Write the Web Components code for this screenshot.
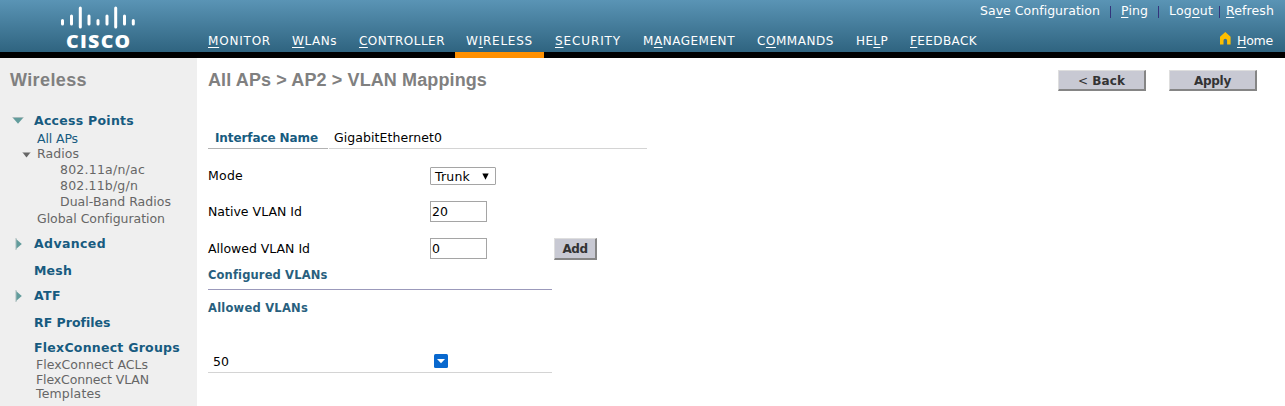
<!DOCTYPE html>
<html lang="en"><head><meta charset="utf-8"><title>Wireless - VLAN Mappings</title>
<style>html,body{margin:0;height:406px;overflow:hidden;background:#fff}body{font:12.5px/16px "DejaVu Sans",sans-serif}</style></head>
<body><wlc-app></wlc-app>
<script>
const define = (name, html, init) => {
  const t = document.createElement('template'); t.innerHTML = html;
  customElements.define(name, class extends HTMLElement {
    constructor() { super(); this.attachShadow({mode:'open'}).append(t.content.cloneNode(true)); }
    connectedCallback() { if (init) init(this, this.shadowRoot); }
  });
};

// A single line of text, tracked so that it fills the width in its "w" attribute.
define('fit-text', `<style>:host{display:inline-block;white-space:pre;flex:none;line-height:16px;height:16px}</style><slot></slot>`, el => {
  const fit = () => {
    el.style.letterSpacing = '0';
    el.style.width = 'auto';
    const n = el.textContent.length, w = +el.getAttribute('w');
    const r = document.createRange(); r.selectNodeContents(el);
    const natural = r.getBoundingClientRect().width;
    if (natural) el.style.letterSpacing = ((w - natural) / n) + 'px';
    el.style.width = w + 'px';
  };
  requestAnimationFrame(fit);
});

define('cisco-logo', `<style>:host{display:block;width:76px;height:52px}svg{display:block;overflow:visible}text{font:800 18px "Open Sans",sans-serif;letter-spacing:1.2px}</style>
<svg width="76" height="52" viewBox="60 6 76 52">
<path stroke="#fff" stroke-width="3" stroke-linecap="round" d="M62.5 20.5v3.5M71.5 16v8M80.3 8v19M89 16v8M98 20.5v3.5M107 16v8M115.7 8v19M124.5 16v8M133.3 20.5v3.5"/>
<text x="66" y="47.8" fill="#fff" textLength="65.5" lengthAdjust="spacingAndGlyphs">CISCO</text></svg>`);

define('nav-item', `<style>:host{display:block;box-sizing:border-box;height:58px;padding:33px 0 0 11px;border-bottom:6px solid #000;color:#fff}
:host([active]){border-bottom-color:#ff9000}</style><slot></slot>`);

define('app-header', `<style>
:host{display:flex;height:58px;background:linear-gradient(#5a94b5,#2f6480 52px,#000 52px);color:#fff;font-size:12.5px}
.logo{width:137px;padding:6px 0 0 60px}
nav{display:flex}
nav nav-item{font-size:12px}
.right{margin-left:auto;width:305px}
.links{display:flex;height:16px;margin-top:3px}
i{width:1px;height:12px;margin:3px 10px 0;background:#33347c}
.home{display:flex;margin:14px 0 0 239px}
svg{margin:-1px 5px 0 0;display:block}
u{text-decoration-thickness:1px;text-underline-offset:2px}
</style>
<div class="logo"><cisco-logo></cisco-logo></div>
<nav>
<nav-item style="width:84px"><fit-text w="63"><u>M</u>ONITOR</fit-text></nav-item>
<nav-item style="width:67px"><fit-text w="45"><u>W</u>LANs</fit-text></nav-item>
<nav-item style="width:107px"><fit-text w="86"><u>C</u>ONTROLLER</fit-text></nav-item>
<nav-item active style="width:89px"><fit-text w="67">W<u>I</u>RELESS</fit-text></nav-item>
<nav-item style="width:88px"><fit-text w="66"><u>S</u>ECURITY</fit-text></nav-item>
<nav-item style="width:114px"><fit-text w="92">M<u>A</u>NAGEMENT</fit-text></nav-item>
<nav-item style="width:99px"><fit-text w="77">C<u>O</u>MMANDS</fit-text></nav-item>
<nav-item style="width:54px"><fit-text w="32">HE<u>L</u>P</fit-text></nav-item>
<nav-item style="width:80px"><fit-text w="67"><u>F</u>EEDBACK</fit-text></nav-item>
</nav>
<div class="right"><div class="links"><fit-text w="120">Sa<u>v</u>e Configuration</fit-text><i></i><fit-text w="27"><u>P</u>ing</fit-text><i></i><fit-text w="44">Log<u>o</u>ut</fit-text><i style="margin:3px 6px 0"></i><fit-text w="48"><u>R</u>efresh</fit-text></div>
<div class="home"><svg width="13" height="14" viewBox="0 0 13 14"><path d="M6.3 0 1 4.8V12.5h3.5V8.6a1.8 1.8 0 0 1 3.6 0v3.9h3.5V4.8z" fill="#fdbf00"/></svg><fit-text w="36"><u>H</u>ome</fit-text></div></div>`);

define('side-item', `<style>
:host{display:flex;height:16px;box-sizing:border-box;padding-left:37px;color:#666;font-size:12.5px}
:host([head]){padding-left:34px;font-weight:bold;color:#175b80}
:host([current]){color:#175b80}
:host([deep]){padding-left:60px}
:host([flex]){padding-left:36px}
svg{display:none;flex:none}
:host([open]) .open,:host([closed]) .closed,:host([small]) .small{display:block}
.open{margin:4px 10px 0 -22px}.closed{margin:2px 11px 0 -19px}.small{margin:6px 6px 0 -15px}
</style>
<svg class="open" width="12" height="8"><path d="M1 1H11L6 6.8z" fill="#629c9c"/><path d="M.5 .5H11.5" stroke="#a8bbbb"/></svg>
<svg class="closed" width="8" height="12"><path d="M1 1 6.8 6 1 11z" fill="#629c9c"/><path d="M1 0V12" stroke="#a8bbbb"/></svg>
<svg class="small" width="9" height="6"><path d="M1 1H8L4.5 5.5z" fill="#666"/><path d="M.5 .5H8.5" stroke="#aaa"/></svg>
<slot></slot>`);

define('side-menu', `<style>:host{display:block;width:197px;height:348px;background:#efefef;flex:none}
h2{margin:0;padding:14px 0 0 10px;height:41px;font:bold 18px/16px "Liberation Sans",sans-serif;color:#808080}</style>
<h2><fit-text w="77">Wireless</fit-text></h2>
<side-item head open><fit-text w="100">Access Points</fit-text></side-item>
<side-item current style="margin-top:2px"><fit-text w="41">All APs</fit-text></side-item>
<side-item small style="margin-top:-1px"><fit-text w="42">Radios</fit-text></side-item>
<side-item deep><fit-text w="85">802.11a/n/ac</fit-text></side-item>
<side-item deep><fit-text w="78">802.11b/g/n</fit-text></side-item>
<side-item deep><fit-text w="111">Dual-Band Radios</fit-text></side-item>
<side-item style="margin-top:1px"><fit-text w="128">Global Configuration</fit-text></side-item>
<side-item head closed style="margin-top:9px"><fit-text w="72">Advanced</fit-text></side-item>
<side-item head style="margin-top:11px"><fit-text w="38">Mesh</fit-text></side-item>
<side-item head closed style="margin-top:9px"><fit-text w="27">ATF</fit-text></side-item>
<side-item head style="margin-top:11px"><fit-text w="76">RF Profiles</fit-text></side-item>
<side-item head style="margin-top:9px"><fit-text w="146">FlexConnect Groups</fit-text></side-item>
<side-item flex style="margin-top:1px"><fit-text w="112">FlexConnect ACLs</fit-text></side-item>
<side-item flex style="margin-top:-1px"><fit-text w="113">FlexConnect VLAN</fit-text></side-item>
<side-item flex style="margin-top:-2px"><fit-text w="65">Templates</fit-text></side-item>`);

define('push-button', `<style>:host{display:flex;box-sizing:border-box;justify-content:center;align-items:center;width:88px;height:21px;background:#c8c9d3;border:solid;border-width:1px 2px 2px 1px;border-color:#dedede #858585 #858585 #dedede;color:#333;padding-top:1px;font:bold 12px/16px "DejaVu Sans",sans-serif}</style><slot></slot>`);
define('text-field', `<style>:host{display:block;box-sizing:border-box;width:57px;height:21px;border:1px solid #a5a5a5;background:#fff;padding:2px 0 0 1px}</style><slot></slot>`);
define('drop-down', `<style>:host{display:flex;box-sizing:border-box;width:66px;height:18px;border:1px solid #a5a5a5;border-radius:1px;background:#fff;padding:1px 0 0 4px}svg{margin:4px 0 0 12px}</style><slot></slot><svg width="7" height="7"><path d="M.3.5H6.7L3.5 6.7z" fill="#000"/></svg>`);
define('form-row', `<style>:host{display:flex;height:22px}.label{width:222px;padding-top:2px}</style><div class="label"><slot name="label"></slot></div><slot></slot>`);

define('vlan-page', `<style>
:host{display:block;flex:1;padding-left:11px;color:#000}
header{display:flex;padding-top:12px;height:60px;box-sizing:border-box}
h1{margin:0;padding-top:2px;width:850px;font:bold 18px/16px "Liberation Sans",sans-serif;color:#808080}
push-button+push-button{margin-left:23px}
.lt{font-weight:normal}
.name{display:flex;margin-top:12px}
.name div{height:18px;border-bottom:1px solid #d4d4d4}
.name .k{width:113px;padding-left:7px;border-color:#b2b2b2;color:#175b80;font-weight:bold;font-size:12px}
.name .v{width:313px;padding-left:5px;margin-left:1px}
h3{margin:0;font:bold 11.5px/16px "DejaVu Sans",sans-serif;color:#285f7e}
.rule{width:344px;border-bottom:1px solid #9b99bb;height:22px;padding-top:0}
.item{display:flex;width:339px;height:18px;padding-left:5px;border-bottom:1px solid #d4d4d4;margin-top:38px}
.item svg{margin-left:205px}
</style>
<header><h1><fit-text w="279">All APs &gt; AP2 &gt; VLAN Mappings</fit-text></h1><push-button><fit-text w="47"><span class="lt">&lt;</span> Back</fit-text></push-button><push-button><fit-text w="37">Apply</fit-text></push-button></header>
<div class="name"><div class="k"><fit-text w="103">Interface Name</fit-text></div><div class="v"><fit-text w="108">GigabitEthernet0</fit-text></div></div>
<form-row style="margin-top:17px"><fit-text slot="label" w="35">Mode</fit-text><drop-down style="margin-top:1px"><fit-text w="35">Trunk</fit-text></drop-down></form-row>
<form-row style="margin-top:14px"><fit-text slot="label" w="94">Native VLAN Id</fit-text><text-field style="margin-top:-1px"><fit-text w="16">20</fit-text></text-field></form-row>
<form-row style="margin-top:15px"><fit-text slot="label" w="102">Allowed VLAN Id</fit-text><text-field style="margin-top:-1px"><fit-text w="8">0</fit-text></text-field><push-button style="margin:-1px 0 0 67px;width:43px;height:22px"><fit-text w="25">Add</fit-text></push-button></form-row>
<h3 class="rule" style="margin-top:6px"><fit-text w="119">Configured VLANs</fit-text></h3>
<h3 style="margin-top:10px"><fit-text w="100">Allowed VLANs</fit-text></h3>
<div class="item"><fit-text w="16">50</fit-text><svg width="14" height="14"><rect width="14" height="14" rx="1.5" fill="#0868ce"/><path d="M3 5H11L7 9.3z" fill="#fff"/></svg></div>`);

define('wlc-app', `<style>:host{display:block;width:1285px;height:406px;background:#fff}main{display:flex}</style>
<app-header></app-header><main><side-menu></side-menu><vlan-page></vlan-page></main>`);
</script></body></html>
